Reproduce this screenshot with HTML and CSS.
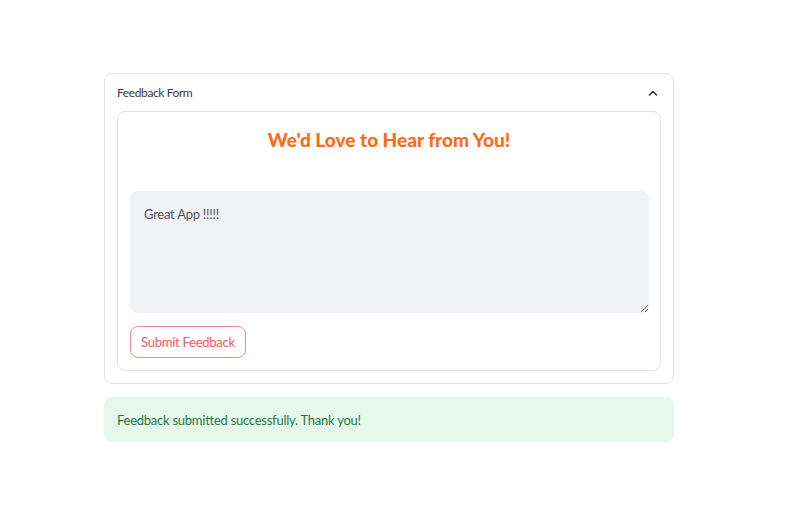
FILE: index.html
```html
<!DOCTYPE html>
<html>
<head>
<meta charset="utf-8">
<link rel="stylesheet" href="styles.css">
</head>
<body>
<div class="page">
  <div class="expander">
    <div class="exp-header">
      <span class="exp-title">Feedback Form</span>
      <svg class="chev" width="12" height="12" viewBox="0 0 12 12"><polyline points="2.5,8 6,4.5 9.5,8" fill="none" stroke="#31333f" stroke-width="1.6" stroke-linecap="round" stroke-linejoin="round"/></svg>
    </div>
    <div class="exp-body">
      <div class="form">
        <h2 class="title">We'd Love to Hear from You!</h2>
        <textarea class="area">Great App !!!!!</textarea>
        <button class="btn">Submit Feedback</button>
      </div>
    </div>
  </div>
  <div class="success">Feedback submitted successfully. Thank you!</div>
</div>
</body>
</html>
```
FILE: styles.css
```css
html, body { margin: 0; padding: 0; background: #fff; }
body { font-family: "Source Sans Pro", Lato, "Noto Sans", sans-serif; color: #31333f; }
.page { width: 570px; padding: 73px 0 0 104px; }
.expander { border: 1px solid #e2e3e7; border-radius: 8px; box-sizing: border-box; }
.exp-header { height: 37px; display: flex; align-items: center; justify-content: space-between; padding: 0 14px 0 12px; }
.exp-title { font-size: 12px; letter-spacing: -0.4px; color: #3a3c46; }
.chev { display: block; }
.exp-body { padding: 0 12px 12px 12px; }
.form { border: 1px solid #e2e3e7; border-radius: 8px; padding: 0 12px 12px 12px; display: flex; flex-direction: column; align-items: flex-start; }
.title { margin: 0; width: 100%; height: 79px; box-sizing: border-box; padding-top: 16px; text-align: center; font-size: 19px; font-weight: 900; color: #ff6a14; line-height: 24px; letter-spacing: 0; }
.area { width: 519px; height: 122px; box-sizing: border-box; border: none; outline: none; background: #f0f2f6; border-radius: 8px; padding: 15px 14px; font-family: inherit; font-size: 13px; letter-spacing: -0.25px; color: #50525b; resize: vertical; margin: 0; display: block; }
.btn { margin-top: 13px; height: 32px; padding: 0 10px; background: #fff; border: 1px solid #f58a8f; border-radius: 8px; color: #ef5a62; font-family: inherit; font-size: 13px; letter-spacing: -0.25px; cursor: pointer; }
.success { margin-top: 13px; height: 45px; border-radius: 8px; background: #e6f8ec; color: #1f7a3e; font-size: 13px; letter-spacing: -0.25px; display: flex; align-items: center; padding: 0 13px; }
```
